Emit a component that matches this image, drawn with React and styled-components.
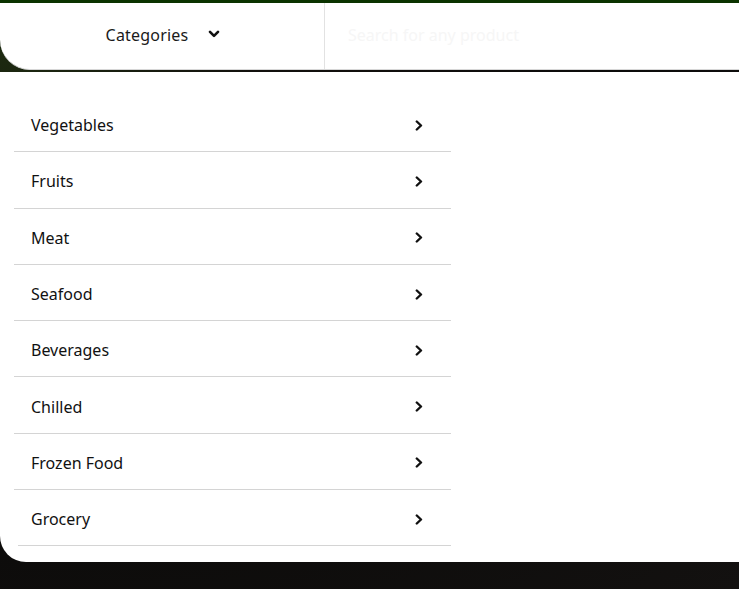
import React from 'react'
import styled, { createGlobalStyle } from 'styled-components'

const Global = createGlobalStyle`
  html, body {
    margin: 0;
    padding: 0;
    height: 100%;
  }
  body {
    font-family: "Noto Sans", "Open Sans", sans-serif;
    background: radial-gradient(ellipse at 0% 8%, #1d2a10 0%, #12100d 25%, #0c0b0a 60%, #131110 100%);
    overflow: hidden;
  }
`

const categories = [
  'Vegetables',
  'Fruits',
  'Meat',
  'Seafood',
  'Beverages',
  'Chilled',
  'Frozen Food',
  'Grocery',
]

function ChevronDown() {
  return (
    <svg width="12" height="8" viewBox="0 0 12 8">
      <polyline points="2,1.8 6,5.8 10,1.8" fill="none" stroke="#111" strokeWidth="2.6" strokeLinecap="round" strokeLinejoin="round" />
    </svg>
  )
}

function ChevronRight() {
  return (
    <svg width="8" height="11" viewBox="0 0 8 11">
      <polyline points="1.8,1.5 6,5.5 1.8,9.5" fill="none" stroke="#111" strokeWidth="2.4" strokeLinecap="round" strokeLinejoin="round" />
    </svg>
  )
}

export default function App() {
  return (
    <>
      <Global />
      <TopStrip />
      <Header>
        <CategoryToggle>
          <span>Categories</span>
          <ChevronDown />
        </CategoryToggle>
        <Search placeholder="Search for any product" />
      </Header>
      <Dropdown>
        {categories.map((c) => (
          <Row key={c}>
            <Label>{c}</Label>
            <ChevronRight />
          </Row>
        ))}
      </Dropdown>
    </>
  )
}

const TopStrip = styled.div`
  height: 3px;
  background: #0b3300;
`

const Header = styled.div`
  display: flex;
  height: 66px;
  background: #fff;
  border-bottom: 1px solid #d6d6d6;
  border-bottom-left-radius: 30px;
`

const CategoryToggle = styled.div`
  width: 325px;
  flex-shrink: 0;
  display: flex;
  align-items: center;
  justify-content: center;
  gap: 20px;
  padding-left: 2px;
  padding-bottom: 2px;
  box-sizing: border-box;
  border-right: 1px solid #e2e2e2;
  font-size: 16px;
  color: #1a1a1a;
  letter-spacing: 0.2px;
  svg {
    margin-bottom: 3px;
  }
`

const Search = styled.input`
  flex: 1;
  border: none;
  outline: none;
  background: transparent;
  padding: 0 0 0 23px;
  font-family: inherit;
  font-size: 16px;
  margin-bottom: 3px;
  &::placeholder {
    color: #f6f6f6;
  }
`

const Dropdown = styled.div`
  margin-top: 2px;
  background: #fff;
  border-bottom-left-radius: 26px;
  padding: 24px 0 16px 14px;
  overflow: hidden;
`

const Row = styled.div`
  width: 437px;
  height: 56.3px;
  display: flex;
  align-items: center;
  justify-content: space-between;
  padding: 3px 28px 0 17px;
  box-sizing: border-box;
  border-bottom: 1px solid #d4d4d4;
  &:last-child {
    margin-left: 4px;
    width: 433px;
    padding-left: 13px;
  }
`

const Label = styled.span`
  font-size: 16px;
  color: #111;
`
